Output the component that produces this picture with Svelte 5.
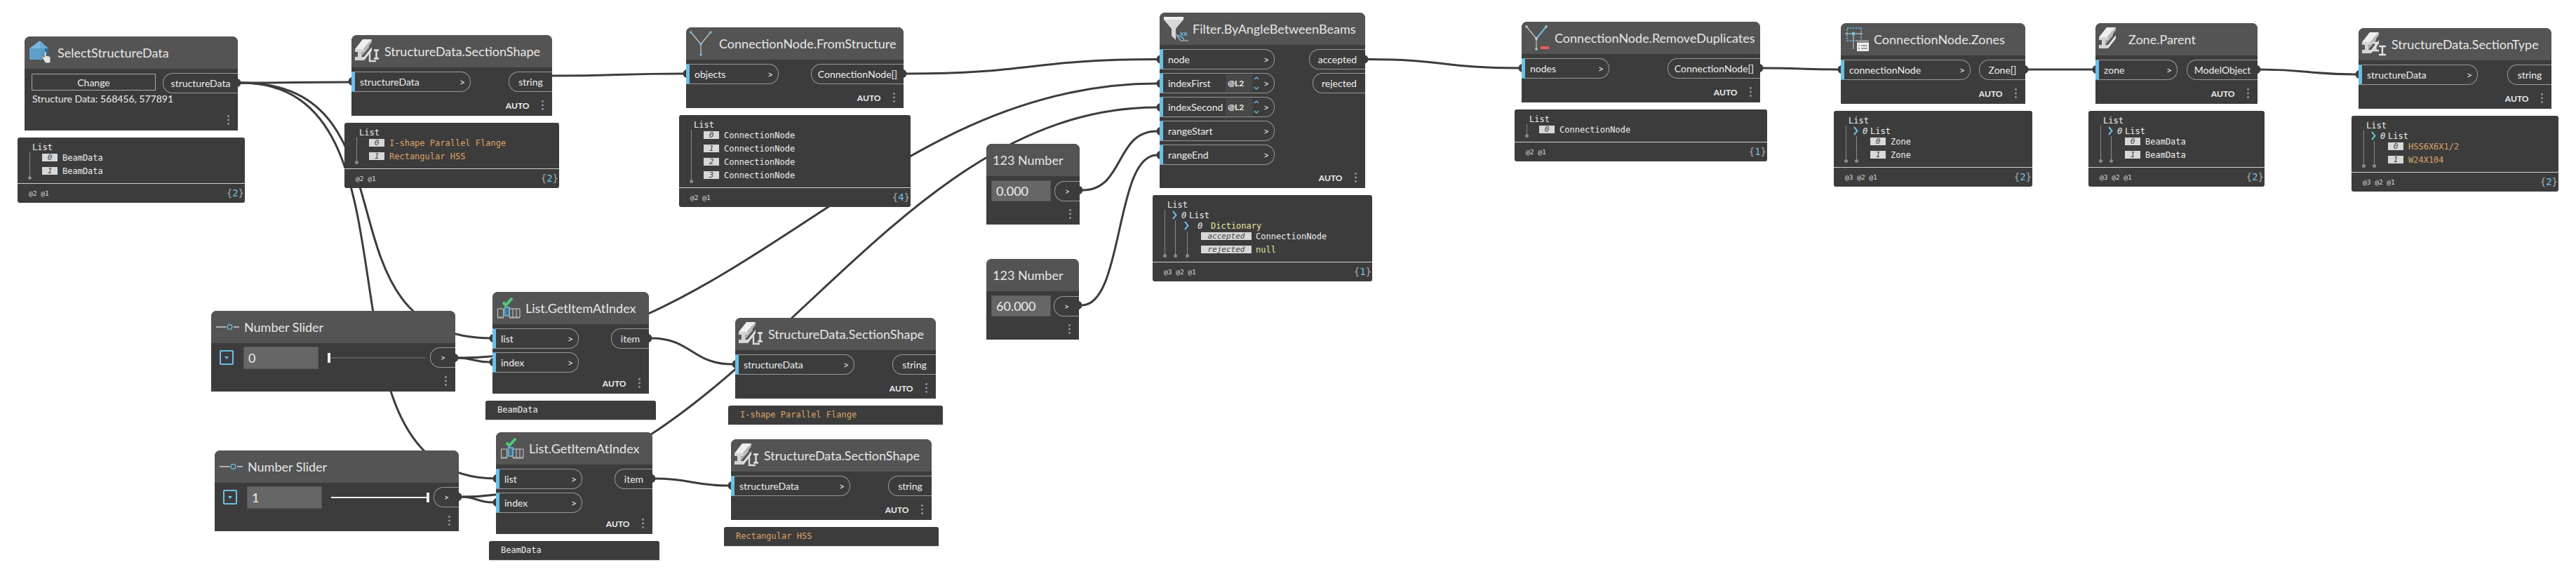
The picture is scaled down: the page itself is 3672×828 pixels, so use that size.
<script>
  const port = (name, lvl = false) => ({ name, lvl });
  const nodes = [
    { kind: 'select', x: 35, y: 52, w: 304, h: 134, title: 'SelectStructureData', icon: 'select', outs: [{ name: 'structureData', w: 107 }] },
    { x: 501, y: 50, w: 286, h: 115, title: 'StructureData.SectionShape', icon: 'shape', inW: 170, ins: [port('structureData')], outs: [{ name: 'string', w: 62 }] },
    { x: 978, y: 39, w: 310, h: 115, title: 'ConnectionNode.FromStructure', icon: 'y', inW: 132, ins: [port('objects')], outs: [{ name: 'ConnectionNode[]', w: 132 }] },
    { x: 1653, y: 18, w: 293, h: 250, title: 'Filter.ByAngleBetweenBeams', icon: 'filter', inW: 164, ins: [port('node'), port('indexFirst', true), port('indexSecond', true), port('rangeStart'), port('rangeEnd')], outs: [{ name: 'accepted', w: 80 }, { name: 'rejected', w: 75 }] },
    { kind: 'number', x: 1406, y: 205, w: 133, h: 115, title: '123 Number', value: '0.000' },
    { kind: 'number', x: 1406, y: 369, w: 132, h: 115, title: '123 Number', value: '60.000' },
    { x: 2169, y: 31, w: 340, h: 115, title: 'ConnectionNode.RemoveDuplicates', icon: 'yminus', inW: 125, ins: [port('nodes')], outs: [{ name: 'ConnectionNode[]', w: 132 }] },
    { x: 2624, y: 33, w: 263, h: 115, title: 'ConnectionNode.Zones', icon: 'zones', inW: 185, ins: [port('connectionNode')], outs: [{ name: 'Zone[]', w: 66 }] },
    { x: 2987, y: 33, w: 231, h: 115, title: 'Zone.Parent', icon: 'beam', inW: 117, ins: [port('zone')], outs: [{ name: 'ModelObject', w: 101 }] },
    { x: 3362, y: 40, w: 275, h: 115, title: 'StructureData.SectionType', icon: 'type', inW: 170, ins: [port('structureData')], outs: [{ name: 'string', w: 63 }] },
    { kind: 'slider', x: 301, y: 443, w: 348, h: 115, title: 'Number Slider', icon: 'slider', value: '0', fill: 0 },
    { kind: 'slider', x: 306, y: 642, w: 348, h: 115, title: 'Number Slider', icon: 'slider', value: '1', fill: 1 },
    { x: 702, y: 416, w: 223, h: 145, title: 'List.GetItemAtIndex', icon: 'getitem', inW: 123, ins: [port('list'), port('index')], outs: [{ name: 'item', w: 54 }] },
    { x: 707, y: 616, w: 223, h: 145, title: 'List.GetItemAtIndex', icon: 'getitem', inW: 123, ins: [port('list'), port('index')], outs: [{ name: 'item', w: 54 }] },
    { x: 1048, y: 453, w: 286, h: 115, title: 'StructureData.SectionShape', icon: 'shape', inW: 170, ins: [port('structureData')], outs: [{ name: 'string', w: 62 }] },
    { x: 1042, y: 626, w: 286, h: 115, title: 'StructureData.SectionShape', icon: 'shape', inW: 170, ins: [port('structureData')], outs: [{ name: 'string', w: 62 }] }
  ];

  const item = (i, val, c = '') => ({ idx: String(i), val, c });
  const nest = (label, pad = 28, a = 6, b = 4, c = '') => ({ nest: true, label, pad, a, b, c });
  const lines17 = (y2) => [{ x: 17, y1: 21, y2 }];
  const lines2 = [{ x: 17, y1: 21, y2: 71 }, { x: 32, y1: 36, y2: 71 }];

  const previews = [
    { x: 25, y: 196, w: 324, h: 93, rows: [item(0, 'BeamData'), item(1, 'BeamData')], lines: lines17(57), lv: '@2 @1', n: 2 },
    { x: 491, y: 175, w: 306, h: 93, rows: [item(0, 'I-shape Parallel Flange', 'str'), item(1, 'Rectangular HSS', 'str')], lines: lines17(56), lv: '@2 @1', n: 2 },
    { x: 968, y: 164, w: 330, h: 131, rows: [0, 1, 2, 3].map((i) => item(i, 'ConnectionNode')), lines: lines17(94), lv: '@2 @1', n: 4 },
    { x: 1643, y: 278, w: 313, h: 123, rows: [
        nest('List'),
        nest('Dictionary', 45, 12, 12, 'kw'),
        { key: 'accepted', val: 'ConnectionNode', c: '' },
        { key: 'rejected', val: 'null', c: 'kw' }
      ], lines: [{ x: 17, y1: 21, y2: 86 }, { x: 32, y1: 36, y2: 86 }, { x: 49, y1: 52, y2: 86 }], lv: '@3 @2 @1', n: 1 },
    { x: 2159, y: 156, w: 360, h: 74, rows: [item(0, 'ConnectionNode')], lines: lines17(37), lv: '@2 @1', n: 1 },
    { x: 2614, y: 158, w: 283, h: 108, deep: true, rows: [nest('List'), item(0, 'Zone'), item(1, 'Zone')], lines: lines2, lv: '@3 @2 @1', n: 2 },
    { x: 2977, y: 158, w: 251, h: 108, deep: true, rows: [nest('List'), item(0, 'BeamData'), item(1, 'BeamData')], lines: lines2, lv: '@3 @2 @1', n: 2 },
    { x: 3352, y: 165, w: 295, h: 108, deep: true, rows: [nest('List'), item(0, 'HSS6X6X1/2', 'str'), item(1, 'W24X104', 'str')], lines: lines2, lv: '@3 @2 @1', n: 2 }
  ];

  const singles = [
    { x: 692, y: 571, w: 243, val: 'BeamData', c: '' },
    { x: 697, y: 771, w: 243, val: 'BeamData', c: '' },
    { x: 1038, y: 578, w: 306, val: 'I-shape Parallel Flange', c: 'str' },
    { x: 1032, y: 751, w: 306, val: 'Rectangular HSS', c: 'str' }
  ];

  const c = (x1, y1, x2, y2, d = (x2 - x1) * 0.5) => `M${x1} ${y1}C${x1 + d} ${y1} ${x2 - d} ${y2} ${x2} ${y2}`;
  const wires = [
    c(343, 118, 498, 117),
    c(343, 118, 707, 682, 280),
    c(343, 118, 702, 482, 260),
    c(786, 108, 974, 105),
    c(1292, 105, 1649, 84.5),
    c(652, 510, 1649, 119, 400),
    c(657, 708, 1649, 153, 400),
    c(652, 510, 698, 516),
    c(657, 708, 703, 716),
    c(928, 482, 1044, 519),
    c(933, 682, 1038, 692),
    c(1543, 271, 1649, 187, 60),
    c(1542, 435, 1649, 221, 60),
    c(1950, 84.5, 2165, 97),
    c(2513, 97, 2620, 99),
    c(2891, 99, 2983, 99),
    c(3222, 99, 3358, 106)
  ];
  const outKnobs = [[339, 118], [1288, 105], [1946, 84.5], [1539, 271], [1538, 435], [2509, 97], [2887, 99], [3218, 99], [649, 510], [654, 708], [925, 482], [930, 682]];
  const inKnobs = [[501, 116], [978, 105], [1653, 84.5], [1653, 119], [1653, 153], [1653, 187], [1653, 221], [2169, 97], [2624, 99], [2987, 99], [3362, 106], [702, 482], [702, 516], [707, 682], [707, 716], [1048, 519], [1042, 692]];
  const knobOut = ([x, y]) => `M${x} ${y - 6}C${x + 6} ${y - 4} ${x + 6} ${y + 4} ${x} ${y + 6}Z`;
  const knobIn = ([x, y]) => `M${x} ${y - 6}C${x - 6} ${y - 4} ${x - 6} ${y + 4} ${x} ${y + 6}Z`;
</script>

{#snippet beam()}
  <polygon points="0,17 11,3 24,3 13,17" fill="#efefef" />
  <polygon points="9,20 20,7 20,15 9,28" fill="#a8a8a8" />
  <polygon points="13,28 24,14 24,19 13,33" fill="#e2e2e2" />
  <polygon points="13,17 24,3 24,7 13,21" fill="#bdbdbd" />
  <polygon points="0,17 13,17 13,21 9,21 9,28 13,28 13,33 0,33 0,28 4,28 4,21 0,21" fill="#d4d4d4" />
{/snippet}

{#snippet dots()}
  <svg class="dots" width="3" height="14" viewBox="0 0 3 14" aria-hidden="true">
    <circle cx="1.5" cy="1.5" r="1.4" /><circle cx="1.5" cy="7" r="1.4" /><circle cx="1.5" cy="12.5" r="1.4" />
  </svg>
{/snippet}

{#snippet nodeIcon(name)}
  {#if name}
    <svg class="icon" width="38" height="40" viewBox="0 0 38 40" aria-hidden="true">
      {#if name === 'select'}
        <polygon points="2,14 17,3 17,30 2,30" fill="#5f9fcb" />
        <polygon points="2,14 17,3 17,14" fill="#79b6dd" />
        <polygon points="17,3 29,14 17,14" fill="#6aabd6" />
        <polygon points="17,14 29,14 29,30 17,30" fill="#5a9ac6" />
        <polygon points="24,14 29,14 29,28 24,28" fill="#2e6c98" />
        <path d="M23 20v7l-2-2c-1-1-2 0-1.500 1l3.500 6c1 2 2 3 4 3h2c2 0 3-1 3-3v-5c0-2-2-2-2-1v-1c0-1-2-1-2 0 0-1-2-1-2 0v-5c0-2-3-2-3 0z" fill="#e4e4e4" stroke="#444" stroke-width=".7" />
      {:else if name === 'shape'}
        {@render beam()}
        <path d="M27 18.500h7M30.500 18.500v12M27 30.500h7" stroke="#e2e2e2" stroke-width="2.400" fill="none" />
        <path d="M21 21v13h9" stroke="#dcdcdc" stroke-width="2.400" fill="none" />
      {:else if name === 'type'}
        {@render beam()}
        <path d="M15 18h9M19.500 18v11M15 29h9" stroke="#e2e2e2" stroke-width="2.400" fill="none" />
        <path d="M24 23h10M29 23v12M24 35h10" stroke="#e2e2e2" stroke-width="2.400" fill="none" />
      {:else if name === 'beam'}
        {@render beam()}
      {:else if name === 'y' || name === 'yminus'}
        <path d="M2 4l14 17v15" stroke="#c9c9c9" stroke-width="1.200" fill="none" />
        <path d="M30 4L16 21" stroke={name === 'yminus' ? '#6ac0e7' : '#c9c9c9'} stroke-width={name === 'yminus' ? 2 : 1.2} fill="none" />
        <circle cx="2" cy="4" r="1.700" fill={name === 'y' ? '#6ac0e7' : '#ccc'} />
        <circle cx="30" cy="4" r="1.700" fill={name === 'y' ? '#6ac0e7' : '#ccc'} />
        <circle cx="16" cy="21" r="1.900" fill={name === 'y' ? '#6ac0e7' : '#ccc'} />
        <circle cx="16" cy="36" r="1.700" fill={name === 'y' ? '#6ac0e7' : '#ccc'} />
        {#if name === 'yminus'}<rect x="22" y="32" width="12" height="4" fill="#e85a5a" />{/if}
      {:else if name === 'filter'}
        <polygon points="1,3 29,3 29,7 18,20 18,36 12,30 12,20 1,7" fill="#d8d8d8" />
        <polygon points="1,3 29,3 29,7 1,7" fill="#eee" />
        <path d="M14 22l11 15h11" stroke="#cfcfcf" stroke-width="1.200" fill="none" />
        <path d="M20 30c4 0 8 2 10 6" stroke="#6ac0e7" stroke-width="1.300" fill="none" />
        <text x="24" y="30" class="xx">xx</text>
      {:else if name === 'zones'}
        <rect x="4" y="4" width="20" height="18" fill="none" stroke="#6ac0e7" stroke-width="1.500" stroke-dasharray="2.500 1.500" />
        <path d="M1 12h25M13 9v25" stroke="#d8d8d8" stroke-width="1" />
        <rect x="11" y="10" width="4" height="4" fill="#6ac0e7" />
        <rect x="18" y="21" width="17" height="16" fill="#f0f0f0" />
        <rect x="18" y="21" width="17" height="4" fill="#8d8d8d" />
        <path d="M20 29h2M24 29h9M20 33h2M24 33h9" stroke="#555" stroke-width="1.200" />
      {:else if name === 'getitem'}
        <path d="M10 12l4 4 9-10" stroke="#4fc97a" stroke-width="4" fill="none" />
        <path d="M2.500 21h8v12h-8zM10.500 21v12M19 21h15v12h-15zM24 21v12M29 21v12" stroke="#cfcfcf" stroke-width="1" fill="none" />
        <path d="M2 34h9M19 34h15" stroke="#aaa" stroke-width="1.500" />
        <rect x="12.500" y="19" width="6.500" height="12" fill="#4d6e82" stroke="#6ac0e7" stroke-width="1.500" />
      {:else if name === 'slider'}
        <path d="M2 20h14.500M27 20h8" stroke="#d0d0d0" stroke-width="1.300" />
        <circle cx="21.500" cy="20" r="3.300" fill="none" stroke="#6ac0e7" stroke-width="1.300" />
      {/if}
    </svg>
  {/if}
{/snippet}

<main class="canvas">
  <svg class="wires" width="3672" height="828" viewBox="0 0 3672 828" aria-hidden="true">
    {#each wires as d}<path {d} class="wire" />{/each}
    {#each outKnobs as k}<path d={knobOut(k)} class="knob" />{/each}
    {#each inKnobs as k}<path d={knobIn(k)} class="knob" />{/each}
  </svg>

  {#each nodes as n}
    <section class="node" style="left:{n.x}px;top:{n.y}px;width:{n.w}px;height:{n.h}px">
      <header class="head" class:plain={n.kind === 'number'}>
        {@render nodeIcon(n.icon)}
        <span class="title">{n.title}</span>
      </header>

      {#if n.kind === 'select'}
        <div class="sel-body">
          <div class="sel-left">
            <button class="change">Change</button>
            <p class="sel-text">Structure Data: 568456, 577891</p>
          </div>
          <div class="out" style="width:{n.outs[0].w}px">{n.outs[0].name}</div>
        </div>
        <div class="foot">{@render dots()}</div>
      {:else if n.kind === 'number'}
        <div class="num-body">
          <div class="num-input">{n.value}</div>
          <div class="out small">&gt;</div>
        </div>
        <div class="foot">{@render dots()}</div>
      {:else if n.kind === 'slider'}
        <div class="sl-body">
          <span class="expand"><i></i></span>
          <div class="sl-input">{n.value}</div>
          <div class="track" class:full={n.fill === 1}><b></b></div>
          <div class="out small">&gt;</div>
        </div>
        <div class="foot">{@render dots()}</div>
      {:else}
        <div class="ports">
          <div class="col">
            {#each n.ins as p}
              <div class="in" class:leveled={p.lvl} style="width:{n.inW}px">
                <span>{p.name}</span>
                {#if p.lvl}
                  <span class="lvl">@L2</span>
                  <svg class="updown" width="14" height="25" viewBox="0 0 14 25" aria-hidden="true">
                    <path d="M0.500 0v25" stroke="#555" />
                    <path d="M4 7l3-3 3 3M4 18l3 3 3-3" stroke="#6ac0e7" stroke-width="1.300" fill="none" />
                  </svg>
                {/if}
                <span class="gt">&gt;</span>
              </div>
            {/each}
          </div>
          <div class="col right">
            {#each n.outs as o}
              <div class="out" style="width:{o.w}px">{o.name}</div>
            {/each}
          </div>
        </div>
        <div class="foot"><span class="auto">AUTO</span>{@render dots()}</div>
      {/if}
    </section>
  {/each}

  {#each previews as p}
    <section class="preview" style="left:{p.x}px;top:{p.y}px;width:{p.w}px;height:{p.h}px">
      <div class="tree">
        <div class="row head-row">List</div>
        {#each p.rows as r}
          {#if r.nest}
            <div class="row nest" style="padding-left:{r.pad}px">
              <svg class="chev" width="7" height="13" viewBox="0 0 7 13" aria-hidden="true"><path d="M1 1l4.500 5.500L1 12" fill="none" stroke="#6ac0e7" stroke-width="2" /></svg>
              <i class="idx" style="margin-left:{r.a}px">0</i>
              <span class={r.c} style="margin-left:{r.b}px">{r.label}</span>
            </div>
          {:else if r.key}
            <div class="row boxed keyed">
              <i class="box key">{r.key}</i>
              <span class={r.c}>{r.val}</span>
            </div>
          {:else}
            <div class="row boxed" class:deep={p.deep}>
              <i class="box">{r.idx}</i>
              <span class={r.c}>{r.val}</span>
            </div>
          {/if}
        {/each}
        {#each p.lines as l}
          <span class="vline" style="left:{l.x}px;top:{l.y1}px;height:{l.y2 - l.y1}px"></span>
        {/each}
      </div>
      <footer class="pfoot">
        <span class="levels">{p.lv}</span>
        <span class="count">&#123;<b>{p.n}</b>&#125;</span>
      </footer>
    </section>
  {/each}

  {#each singles as s}
    <section class="single" style="left:{s.x}px;top:{s.y}px;width:{s.w}px"><span class={s.c}>{s.val}</span></section>
  {/each}
</main>

<style>
  :global(body) { margin: 0; background: #fff; }
  .canvas { position: relative; width: 3672px; height: 828px; overflow: hidden; background: #fff; font-family: Lato, "Open Sans", sans-serif; color: #eee; }
  .wires { position: absolute; left: 0; top: 0; }
  .wire { fill: none; stroke: #3c3c3c; stroke-width: 3; }
  .knob { fill: #3c3c3c; }

  .node { position: absolute; display: flex; flex-direction: column; box-sizing: border-box; background: #3c3c3c; border-radius: 8px 8px 0 0; }
  .head { display: flex; align-items: center; flex: 0 0 46px; gap: 4px; padding-left: 5px; background: #545454; border-radius: 8px 8px 0 0; overflow: hidden; }
  .head.plain { padding-left: 9px; }
  .icon { flex: none; overflow: visible; }
  .xx { font: 700 10px Lato, sans-serif; fill: #6ac0e7; }
  .title { font-size: 18px; color: #e6e6e6; white-space: nowrap; line-height: 46px; }

  .ports { display: flex; justify-content: space-between; padding-top: 6px; }
  .col { display: flex; flex-direction: column; gap: 5px; }
  .col.right { align-items: flex-end; }
  .in, .out { box-sizing: border-box; height: 29px; display: flex; align-items: center; font-size: 14px; color: #eee; white-space: nowrap; }
  .in { position: relative; padding: 0 6px 0 7px; background: #3c3c3c; border: 1px solid #999; border-left: 5px solid #6ac0e7; border-radius: 0 14px 14px 0; }
  .gt { margin-left: auto; padding-right: 1px; }
  .lvl { position: absolute; left: 89px; top: 1px; width: 36px; height: 25px; line-height: 25px; background: #484848; font-size: 12px; font-weight: 700; text-indent: 3px; }
  .updown { position: absolute; left: 126px; top: 1px; }
  .out { justify-content: center; border: 1px solid #999; border-right: 0; border-radius: 14px 0 0 14px; }
  .out.small { width: 36px; font-size: 12px; }
  .foot { margin-top: auto; height: 30px; flex: none; display: flex; align-items: center; justify-content: flex-end; gap: 17px; padding-right: 12.500px; }
  .auto { font-size: 12px; font-weight: 700; color: #eee; }
  .dots { fill: #9a9a9a; flex: none; }

  .sel-body { display: flex; justify-content: space-between; padding: 6px 0 0 10px; }
  .sel-left { width: 177px; }
  .change { display: block; box-sizing: border-box; width: 177px; height: 24px; margin: 1px 0 0; padding: 0; background: transparent; border: 1px solid #aaa; color: #eee; font: 14px Lato, sans-serif; }
  .sel-text { margin: 3px 0 0 1px; font-size: 14px; line-height: 18px; white-space: nowrap; color: #eee; }

  .num-body { display: flex; justify-content: space-between; align-items: center; padding: 6px 0 0 7px; }
  .num-input { box-sizing: border-box; width: 85px; height: 30px; padding-left: 6px; background: #666; border: 1px solid #555; font-size: 18px; line-height: 28px; color: #eee; }

  .sl-body { display: flex; align-items: center; padding-top: 6px; height: 29px; }
  .expand { box-sizing: border-box; flex: none; width: 20px; height: 21px; margin-left: 12px; border: 2px solid #6ac0e7; border-radius: 2px; display: flex; align-items: center; justify-content: center; }
  .expand i { width: 0; height: 0; border-left: 3.500px solid transparent; border-right: 3.500px solid transparent; border-top: 4px solid #6ac0e7; }
  .sl-input { box-sizing: border-box; flex: none; width: 107px; height: 32px; margin-left: 14px; padding-left: 6px; background: #666; border: 1px solid #555; font-size: 18px; line-height: 30px; color: #eee; }
  .track { position: relative; flex: none; width: 140px; height: 2px; margin-left: 13px; margin-right: 6px; background: #5a5a5a; }
  .track b { position: absolute; left: 0; top: -6px; width: 4px; height: 14px; background: #eee; }
  .track.full { background: #eee; }
  .track.full b { left: auto; right: 0; }

  .preview { position: absolute; display: flex; flex-direction: column; box-sizing: border-box; background: #3c3c3c; border-radius: 3px; font: 12px "DejaVu Sans Mono", monospace; color: #eee; }
  .tree { position: relative; flex: 1; padding-top: 6px; }
  .row { display: flex; align-items: center; height: 15px; white-space: nowrap; }
  .head-row { padding-left: 21px; }
  .boxed { height: 19px; padding-left: 35px; gap: 7px; }
  .boxed.deep { padding-left: 52px; }
  .row:not(.boxed) + .boxed { margin-top: -2px; }
  .keyed { padding-left: 69px; gap: 6px; }
  .box { flex: none; box-sizing: border-box; width: 22px; height: 11px; background: #d8d8d8; color: #444; font-size: 11px; line-height: 11px; text-align: center; }
  .box.key { width: 72px; height: 11px; }
  .idx { width: 7px; color: #eee; }
  .chev { flex: none; }
  .str { color: #dca266; }
  .kw { color: #e6e6a0; }
  .vline { position: absolute; width: 1px; background: #8a8a8a; }
  .vline::after { content: ""; position: absolute; left: -2px; bottom: -3px; width: 5px; height: 5px; border-radius: 50%; background: #8a8a8a; }
  .pfoot { flex: 0 0 28px; box-sizing: border-box; display: flex; align-items: center; justify-content: space-between; padding: 0 1px 0 16px; border-top: 1px solid #d0d0d0; }
  .levels { font-size: 9.500px; color: #ddd; }
  .count { font-size: 14px; color: #aaa; margin-top: -2px; }
  .count b { font-weight: 400; color: #6ac0e7; }
  .single { position: absolute; box-sizing: border-box; height: 28px; padding-left: 17px; background: #3c3c3c; border-bottom: 1px solid #c8c8c8; border-radius: 3px 3px 0 0; font: 12px/26px "DejaVu Sans Mono", monospace; color: #eee; }
</style>
